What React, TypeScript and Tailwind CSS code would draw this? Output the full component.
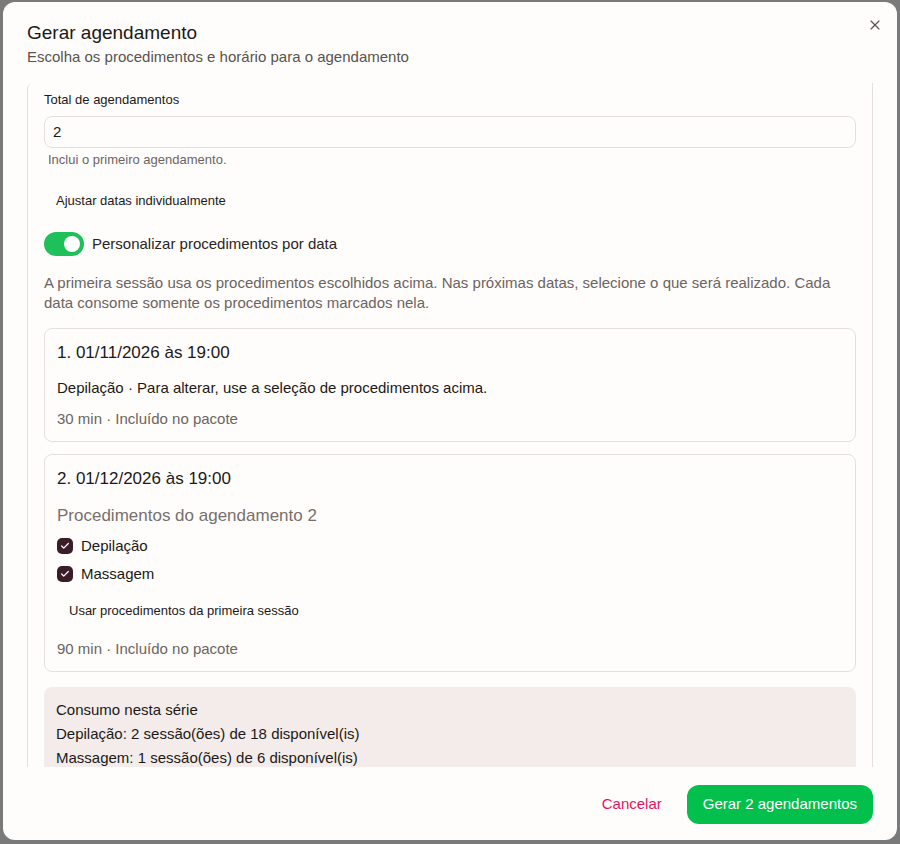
import { X, Check } from "lucide-react";

const font = { fontFamily: '"Liberation Sans", Arial, sans-serif' };

export default function App() {
  return (
    <div className="h-[844px] w-[900px] bg-[#7a7a7a] p-[3px] pt-[2px]" style={font}>
      <div className="relative flex h-[838px] w-[894px] flex-col rounded-xl bg-[#fffdfc] text-[#1c1917]">
        {/* Close */}
        <button className="absolute right-[14px] top-[15px] text-[#57534e]">
          <X className="h-4 w-4" strokeWidth={1.75} />
        </button>

        {/* Header */}
        <div className="px-6 pt-[19px]">
          <h2 className="text-[19px] font-medium leading-6 text-[#1c1917]">Gerar agendamento</h2>
          <p className="mt-[2px] text-[15px] leading-5 text-[#57534e]">
            Escolha os procedimentos e horário para o agendamento
          </p>
        </div>

        {/* Scroll area */}
        <div className="mx-6 mt-[16px] min-h-0 flex-1 overflow-hidden rounded-tl-md border-x border-[#e4e0de] px-4">
          <div className="pt-[7px]">
            <label className="block text-[13px] leading-5 text-[#1c1917]">Total de agendamentos</label>
            <div className="mt-[6px] flex h-8 items-center rounded-lg border border-[#e4e0de] px-2 text-[15px]">
              2
            </div>
            <p className="mt-[2px] px-1 text-[13px] leading-5 text-[#6b6460]">Inclui o primeiro agendamento.</p>

            <button className="mt-[15px] h-8 px-3 text-[13px] text-[#1c1917]">Ajustar datas individualmente</button>

            <div className="mt-[15px] flex items-center gap-2">
              <span className="flex h-6 w-10 items-center justify-end rounded-full bg-[#1ec05a] px-[4px]">
                <span className="h-4 w-4 rounded-full bg-white" />
              </span>
              <span className="text-[15px] text-[#2a2522]">Personalizar procedimentos por data</span>
            </div>

            <p className="mt-[17px] text-[15px] leading-5 text-[#6b6460]">
              A primeira sessão usa os procedimentos escolhidos acima. Nas próximas datas, selecione o que será
              realizado. Cada data consome somente os procedimentos marcados nela.
            </p>

            {/* Card 1 */}
            <div className="mt-[15px] rounded-lg border border-[#e4e0de] px-[12px] pb-[12px] pt-[12px]">
              <h3 className="text-[17px] leading-6">1. 01/11/2026 às 19:00</h3>
              <p className="mt-[13px] text-[15px] leading-5">
                Depilação · Para alterar, use a seleção de procedimentos acima.
              </p>
              <p className="mt-[11px] text-[15px] leading-5 text-[#6b6460]">30 min · Incluído no pacote</p>
            </div>

            {/* Card 2 */}
            <div className="mt-[12px] rounded-lg border border-[#e4e0de] px-[12px] pb-[12px] pt-[12px]">
              <h3 className="text-[17px] leading-6">2. 01/12/2026 às 19:00</h3>
              <p className="mt-[13px] text-[17px] leading-6 text-[#77706c]">Procedimentos do agendamento 2</p>
              <div className="mt-[8px] flex flex-col gap-[8px]">
                {["Depilação", "Massagem"].map((p) => (
                  <div key={p} className="flex items-center gap-2">
                    <span className="flex h-4 w-4 items-center justify-center rounded-[5px] bg-[#3a1d29]">
                      <Check className="h-[10px] w-[10px] text-white" strokeWidth={3} />
                    </span>
                    <span className="text-[15px] leading-5">{p}</span>
                  </div>
                ))}
              </div>
              <button className="mt-[11px] h-8 px-3 text-[13px]">Usar procedimentos da primeira sessão</button>
              <p className="mt-[12px] text-[15px] leading-5 text-[#6b6460]">90 min · Incluído no pacote</p>
            </div>

            {/* Consumo */}
            <div className="mt-[15px] rounded-lg bg-[#f3ecea] px-3 pb-3 pt-[11px] text-[15px] leading-6">
              <p>Consumo nesta série</p>
              <p>Depilação: 2 sessão(ões) de 18 disponível(is)</p>
              <p>Massagem: 1 sessão(ões) de 6 disponível(is)</p>
            </div>
          </div>
        </div>

        {/* Footer */}
        <div className="flex items-center justify-end gap-[25px] px-6 pb-[16px] pt-[18px]">
          <button className="text-[15px] text-[#e2155c]">Cancelar</button>
          <button className="h-[39px] rounded-xl bg-[#03c04d] px-4 text-[15px] font-medium text-white">
            Gerar 2 agendamentos
          </button>
        </div>
      </div>
    </div>
  );
}
